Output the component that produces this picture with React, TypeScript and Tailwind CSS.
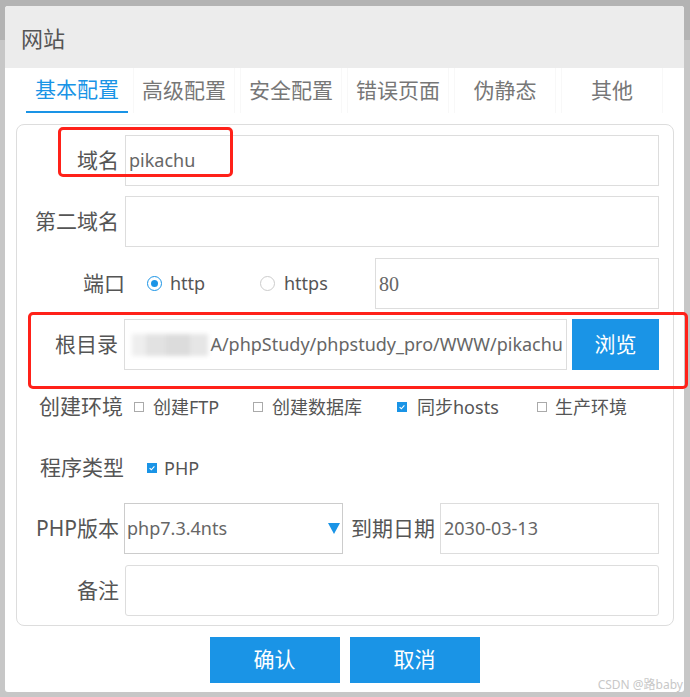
const blue = 'bg-[#1a94e6]';

const Checkbox = ({ checked }: { checked?: boolean }) =>
  checked ? (
    <span className={`flex h-[10px] w-[10px] items-center justify-center ${blue}`}>
      <svg viewBox="0 0 10 10" className="h-[8px] w-[8px]">
        <path d="M2 5.2 L4.2 7.2 L8 3" fill="none" stroke="white" strokeWidth="1.4" />
      </svg>
    </span>
  ) : (
    <span className="h-[10px] w-[10px] border border-[#aaa] bg-white" />
  );

const Radio = ({ checked }: { checked?: boolean }) => (
  <span
    className={`flex h-[15px] w-[15px] items-center justify-center rounded-full border ${
      checked ? 'border-[#1a94e6]' : 'border-[#ccc]'
    }`}
  >
    {checked && <span className={`h-[7px] w-[7px] rounded-full ${blue}`} />}
  </span>
);

const Field = ({ children, className = '' }: { children?: React.ReactNode; className?: string }) => (
  <div
    className={`flex h-full flex-1 items-center border border-[#ddd] px-[3px] text-[18px] text-[#666] ${className}`}
  >
    {children}
  </div>
);

const tabs = ['基本配置', '高级配置', '安全配置', '错误页面', '伪静态', '其他'];

export default function App() {
  return (
    <div className="relative h-[697px] w-[690px] overflow-hidden bg-[linear-gradient(#b3b3b3_0_40px,#c7c7c7_40px)] pl-[5px] pt-[6px] font-['Noto_Sans','Noto_Sans_CJK_SC',sans-serif]">
      <div className="flex h-[686px] w-[679px] flex-col rounded-[3px] bg-white">
        <div className="flex h-[62px] items-center rounded-t-[3px] bg-[#ececec] pl-[16px] pt-[3px] text-[22px] text-[#555]">
          网站
        </div>

        <div className="flex h-[45px] gap-[5px] pl-[21px]">
          {tabs.map((t, i) => (
            <div
              key={t}
              className={`flex w-[102px] items-center justify-center text-[21px] ${
                i === 0
                  ? 'border-b-2 border-[#1a94e6] text-[#1a94e6]'
                  : 'border-x border-[#f8f8f8] text-[#777]'
              }`}
            >
              {t}
            </div>
          ))}
        </div>

        <div className="mx-[11px] mt-[11px] flex w-[658px] flex-col gap-[10px] rounded-[8px] border border-[#ddd] pb-[9px] pr-[14px] pt-[10px] text-[#555]">
          <div className="flex h-[51px] items-center">
            <div className="w-[108px] pr-[6px] text-right text-[21px]">域名</div>
            <Field>pikachu</Field>
          </div>

          <div className="flex h-[51px] items-center">
            <div className="w-[108px] pr-[6px] text-right text-[21px]">第二域名</div>
            <Field />
          </div>

          <div className="mt-[1px] flex h-[51px] items-center">
            <div className="w-[108px] text-right text-[21px]">端口</div>
            <div className="ml-[22px] flex w-[113px] items-center gap-[8px] text-[18px]">
              <Radio checked />
              http
            </div>
            <div className="flex w-[113px] items-center gap-[9px] text-[18px]">
              <Radio />
              https
            </div>
            <Field className="ml-[2px] font-['Liberation_Serif',serif] text-[20px]">80</Field>
          </div>

          <div className="flex h-[51px] items-center">
            <div className="w-[107px] pr-[6px] text-right text-[21px]">根目录</div>
            <Field className="justify-end overflow-hidden whitespace-nowrap">
              <span className="flex shrink-0 blur-[2px]">
                <span className="h-[22px] w-[14px] bg-[#eee]" />
                <span className="h-[22px] w-[20px] bg-[#e2e2e2]" />
                <span className="h-[22px] w-[24px] bg-[#dcdcdc]" />
                <span className="h-[22px] w-[18px] bg-[#e6e6e6]" />
              </span>
              <span className="shrink-0 pl-[2px]">A/phpStudy/phpstudy_pro/WWW/pikachu</span>
            </Field>
            <button className={`ml-[5px] h-full w-[87px] ${blue} text-[21px] text-white`}>浏览</button>
          </div>

          <div className="flex h-[54px] items-center text-[18px]">
            <div className="w-[108px] pr-[2px] text-right text-[21px]">创建环境</div>
            <div className="ml-[9px] flex w-[119px] items-center gap-[9px]">
              <Checkbox />
              创建FTP
            </div>
            <div className="flex w-[144px] items-center gap-[9px]">
              <Checkbox />
              创建数据库
            </div>
            <div className="flex w-[140px] items-center gap-[10px]">
              <Checkbox checked />
              同步hosts
            </div>
            <div className="flex items-center gap-[8px]">
              <Checkbox />
              生产环境
            </div>
          </div>

          <div className="flex h-[48px] items-center text-[18px]">
            <div className="w-[108px] pr-[1px] text-right text-[21px]">程序类型</div>
            <div className="ml-[22px] flex items-center gap-[7px]">
              <Checkbox checked />
              PHP
            </div>
          </div>

          <div className="mt-[1px] flex h-[51px] items-center">
            <div className="w-[107px] pr-[5px] text-right text-[21px]">PHP版本</div>
            <div className="flex h-full w-[219px] items-center justify-between border border-[#ccc] pl-[2px] pr-[2px] text-[18px] text-[#666]">
              php7.3.4nts
              <svg viewBox="0 0 12 11" className="h-[11px] w-[12px]">
                <polygon points="0,0 12,0 6,11" fill="#1a94e6" />
              </svg>
            </div>
            <div className="ml-[8px] mr-[5px] text-[21px]">到期日期</div>
            <Field>2030-03-13</Field>
          </div>

          <div className="mt-[1px] flex h-[51px] items-center">
            <div className="w-[108px] pr-[6px] text-right text-[21px]">备注</div>
            <Field className="rounded-[3px]" />
          </div>
        </div>

        <div className="mt-[11px] flex justify-center gap-[10px]">
          <button className={`h-[46px] w-[130px] ${blue} text-[21px] text-white`}>确认</button>
          <button className={`h-[46px] w-[130px] ${blue} text-[21px] text-white`}>取消</button>
        </div>
      </div>

      <div className="absolute left-[58px] top-[127px] h-[50px] w-[175px] rounded-[5px] border-[3px] border-[#ff2119]" />
      <div className="absolute left-[28px] top-[312px] h-[77px] w-[660px] rounded-[5px] border-[3px] border-[#ff2119]" />

      <div className="absolute bottom-[6px] right-[7px] text-[12px] leading-none text-[#c8c8c8]">CSDN @路baby</div>
    </div>
  );
}
